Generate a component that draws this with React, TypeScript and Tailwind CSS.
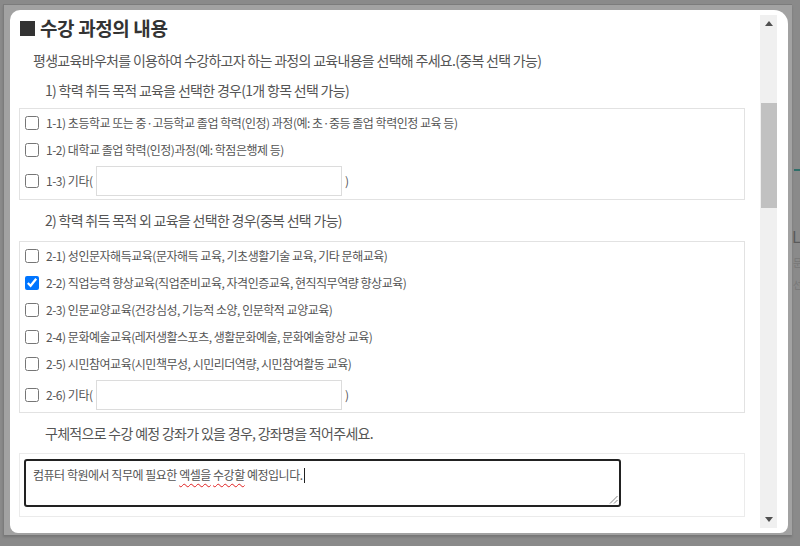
import React from "react";

function Check({ checked = false }: { checked?: boolean }) {
  return (
    <input
      type="checkbox"
      defaultChecked={checked}
      className="m-0 ml-[5px] mr-[7px] h-[14px] w-[14px] shrink-0 accent-[#0075ff]"
    />
  );
}

function Row({ label, checked = false }: { label: string; checked?: boolean }) {
  return (
    <div className="flex h-[27px] items-center">
      <Check checked={checked} />
      <span className="whitespace-nowrap text-[12px] tracking-[-0.04em] text-[#555]">{label}</span>
    </div>
  );
}

function EtcRow({ label, h }: { label: string; h: string }) {
  return (
    <div className={`flex items-center ${h}`}>
      <Check />
      <span className="w-[49px] whitespace-nowrap text-[12px] tracking-[-0.04em] text-[#555]">{label}</span>
      <div className="ml-px h-[30px] w-[246px] border border-[#dcdcdc] bg-white" />
      <span className="ml-[3px] text-[12px] text-[#555]">)</span>
    </div>
  );
}

export default function App() {
  return (
    <div className="relative h-[546px] w-[800px] overflow-hidden bg-[#8a8a8a] font-['Noto_Sans_CJK_KR','Noto_Sans',sans-serif]">
      {/* faint page content behind overlay */}
      <div className="absolute left-[794px] top-[169px] h-[2px] w-[6px] bg-[#2f6f6a]" />
      <div className="absolute left-[792px] top-[228px] text-[16px] leading-none text-[#5a5a5a]">L</div>
      <div className="absolute left-[793px] top-[258px] text-[10px] leading-none text-[#777]">문</div>
      <div className="absolute left-[793px] top-[280px] text-[10px] leading-none text-[#777]">선</div>

      {/* modal frame */}
      <div className="ml-[3px] mt-[4px] h-[531px] w-[789px] border-l border-t border-[#7c7c7c] bg-[#a2a2a2] pl-[6px] pt-[5px] shadow-[0_2px_2px_rgba(0,0,0,0.15)]">
        <div className="flex h-[523px] w-[778px] rounded-tl-[10px] rounded-tr-[14px] rounded-br-[8px] rounded-bl-[8px] bg-white">
          {/* content */}
          <div className="flex w-[750px] flex-col">
            <div className="ml-[10px] mt-[8px] flex h-[20px] items-center text-[19px] font-bold tracking-[-0.02em] text-[#333]">
              <span className="mr-[5px] inline-block h-[15px] w-[15px] bg-[#333]" />
              <span>수강 과정의 내용</span>
            </div>
            <div className="ml-[23px] mt-[12px] flex h-[20px] items-center whitespace-nowrap text-[14px] tracking-[-0.05em] text-[#555]">
              평생교육바우처를 이용하여 수강하고자 하는 과정의 교육내용을 선택해 주세요.(중복 선택 가능)
            </div>
            <div className="ml-[35px] mt-[10px] flex h-[20px] items-center whitespace-nowrap text-[14px] tracking-[-0.05em] text-[#555]">
              1) 학력 취득 목적 교육을 선택한 경우(1개 항목 선택 가능)
            </div>
            <div className="ml-[9px] mt-[8px] w-[726px] border border-[#e2e2e2]">
              <Row label="1-1) 초등학교 또는 중·고등학교 졸업 학력(인정) 과정(예: 초·중등 졸업 학력인정 교육 등)" />
              <Row label="1-2) 대학교 졸업 학력(인정)과정(예: 학점은행제 등)" />
              <EtcRow label="1-3) 기타(" h="h-[36px]" />
            </div>
            <div className="ml-[35px] flex h-[41px] items-center whitespace-nowrap text-[14px] tracking-[-0.05em] text-[#555]">
              2) 학력 취득 목적 외 교육을 선택한 경우(중복 선택 가능)
            </div>
            <div className="ml-[9px] w-[726px] border border-[#e2e2e2]">
              <Row label="2-1) 성인문자해득교육(문자해득 교육, 기초생활기술 교육, 기타 문해교육)" />
              <Row label="2-2) 직업능력 향상교육(직업준비교육, 자격인증교육, 현직직무역량 향상교육)" checked />
              <Row label="2-3) 인문교양교육(건강심성, 기능적 소양, 인문학적 교양교육)" />
              <Row label="2-4) 문화예술교육(레저생활스포츠, 생활문화예술, 문화예술향상 교육)" />
              <Row label="2-5) 시민참여교육(시민책무성, 시민리더역량, 시민참여활동 교육)" />
              <EtcRow label="2-6) 기타(" h="h-[35px]" />
            </div>
            <div className="ml-[35px] flex h-[40px] items-center whitespace-nowrap text-[14px] tracking-[-0.05em] text-[#555]">
              구체적으로 수강 예정 강좌가 있을 경우, 강좌명을 적어주세요.
            </div>
            <div className="ml-[9px] h-[64px] w-[726px] border border-[#ebebeb] pl-[4px] pt-[5px]">
              <div className="relative h-[48px] w-[597px] rounded-[3px] border-2 border-[#222] px-[7px] pt-[4px] text-[12px] tracking-[-0.04em] text-[#555]">
                <span>컴퓨터 학원에서 직무에 필요한 </span>
                <span className="underline decoration-[#e02020] decoration-wavy decoration-1 underline-offset-[3px]">엑셀을</span>
                <span> </span>
                <span className="underline decoration-[#e02020] decoration-wavy decoration-1 underline-offset-[3px]">수강할</span>
                <span> 예정입니다.</span>
                <span className="ml-px inline-block h-[15px] w-px translate-y-[3px] bg-[#222]" />
                <svg className="absolute bottom-[1px] right-[1px]" width="9" height="9" viewBox="0 0 9 9">
                  <line x1="8.5" y1="1" x2="1" y2="8.5" stroke="#888" strokeWidth="1" />
                  <line x1="8.5" y1="5" x2="5" y2="8.5" stroke="#888" strokeWidth="1" />
                </svg>
              </div>
            </div>
          </div>
          {/* scrollbar */}
          <div className="mb-[5px] mt-[5px] flex w-[17px] flex-col items-center bg-[#f0f0f0]">
            <div className="flex h-[17px] w-full items-center justify-center">
              <svg width="8" height="5" viewBox="0 0 8 5"><path d="M0 5 L4 0 L8 5 Z" fill="#505050" /></svg>
            </div>
            <div className="mt-[71px] h-[105px] w-[16px] bg-[#c1c1c1]" />
            <div className="flex-1" />
            <div className="flex h-[17px] w-full items-center justify-center">
              <svg width="8" height="5" viewBox="0 0 8 5"><path d="M0 0 L8 0 L4 5 Z" fill="#505050" /></svg>
            </div>
          </div>
        </div>
      </div>
    </div>
  );
}
